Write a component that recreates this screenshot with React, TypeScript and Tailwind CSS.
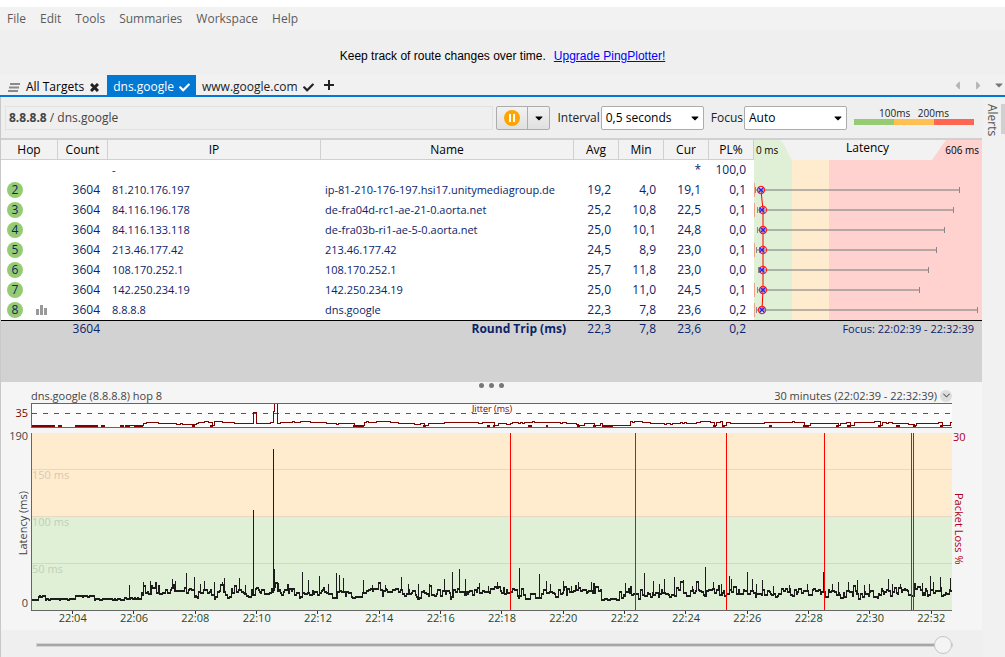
import React from 'react';
import { FaCheck, FaCaretDown, FaCaretLeft, FaCaretRight } from 'react-icons/fa';
import { HiChevronDown } from 'react-icons/hi2';

const menuItems = ['File', 'Edit', 'Tools', 'Summaries', 'Workspace', 'Help'];

interface Hop {
  hop: string;
  count: string;
  ip: string;
  name: string;
  avg: string;
  min: string;
  cur: string;
  pl: string;
}

const hops: Hop[] = [
  { hop: '', count: '', ip: '-', name: '', avg: '', min: '', cur: '*', pl: '100,0' },
  { hop: '2', count: '3604', ip: '81.210.176.197', name: 'ip-81-210-176-197.hsi17.unitymediagroup.de', avg: '19,2', min: '4,0', cur: '19,1', pl: '0,1' },
  { hop: '3', count: '3604', ip: '84.116.196.178', name: 'de-fra04d-rc1-ae-21-0.aorta.net', avg: '25,2', min: '10,8', cur: '22,5', pl: '0,1' },
  { hop: '4', count: '3604', ip: '84.116.133.118', name: 'de-fra03b-ri1-ae-5-0.aorta.net', avg: '25,0', min: '10,1', cur: '24,8', pl: '0,0' },
  { hop: '5', count: '3604', ip: '213.46.177.42', name: '213.46.177.42', avg: '24,5', min: '8,9', cur: '23,0', pl: '0,1' },
  { hop: '6', count: '3604', ip: '108.170.252.1', name: '108.170.252.1', avg: '25,7', min: '11,8', cur: '23,0', pl: '0,0' },
  { hop: '7', count: '3604', ip: '142.250.234.19', name: '142.250.234.19', avg: '25,0', min: '11,0', cur: '24,5', pl: '0,1' },
  { hop: '8', count: '3604', ip: '8.8.8.8', name: 'dns.google', avg: '22,3', min: '7,8', cur: '23,6', pl: '0,2' },
];

// whisker ends and markers of each hop, in graph units
const ranges = [
  { min: 2, max: 206, avg: 7, cur: 7, loss: 1 },
  { min: 4, max: 200, avg: 9, cur: 8, loss: 1 },
  { min: 4, max: 191, avg: 9, cur: 9, loss: 0 },
  { min: 3, max: 183, avg: 9, cur: 8, loss: 2 },
  { min: 5, max: 175, avg: 9, cur: 8, loss: 0 },
  { min: 4, max: 166, avg: 9, cur: 9, loss: 2 },
  { min: 3, max: 224, avg: 8, cur: 8, loss: 2 },
];

const times = [
  '22:04', '22:06', '22:08', '22:10', '22:12', '22:14', '22:16', '22:18',
  '22:20', '22:22', '22:24', '22:26', '22:28', '22:30', '22:32',
];

const PLOT_W = 920;
const PLOT_H = 177;

const lossLines = [478, 603, 694, 792, 879, 881];

// [x, height above the axis]
const spikes: number[][] = [
  [98, 25], [112, 28], [119, 29], [125, 23], [141, 31], [144, 29], [155, 37], [163, 33], [169, 26], [173, 29],
  [183, 28], [191, 28], [193, 32], [208, 32], [214, 25], [222, 100], [242, 161], [243, 41], [247, 27], [257, 25],
  [271, 38], [277, 30], [288, 34], [297, 26], [305, 37], [308, 35], [312, 32], [332, 30], [341, 25], [348, 27],
  [354, 25], [370, 33], [377, 26], [387, 26], [398, 26], [413, 31], [421, 38], [428, 41], [434, 31], [448, 27],
  [457, 24], [466, 28], [479, 34], [488, 42], [508, 36], [515, 29], [519, 26], [532, 29], [540, 24], [547, 28],
  [560, 28], [594, 27], [604, 28], [613, 37], [622, 29], [628, 26], [633, 31], [643, 33], [652, 30],
  [661, 24], [674, 43], [682, 28], [690, 26], [698, 34], [700, 31], [716, 38], [721, 31], [725, 26], [731, 30],
  [742, 24], [758, 25], [776, 26], [792, 38], [801, 26], [807, 28], [817, 28], [826, 30], [833, 25], [838, 26],
  [857, 31], [861, 26], [869, 26], [891, 27], [899, 34], [902, 28], [909, 33], [919, 32],
];

// quiet stretches: [from, to, height]
const calm: number[][] = [
  [0, 5, 11], [5, 12, 14], [12, 44, 11], [44, 63, 14], [63, 92, 11], [92, 108, 12],
  [319, 330, 13], [494, 499, 11], [570, 586, 11],
];

function makeRandom(seed: number) {
  let s = seed;
  return () => {
    s = (s * 1103515245 + 12345) % 2147483648;
    return s / 2147483648;
  };
}

function latencyPath() {
  const rnd = makeRandom(41);
  let d = `M0 ${PLOT_H - 11}`;
  let y = PLOT_H - 11;
  let next = 0;
  for (let x = 1; x < PLOT_W; x += 1) {
    if (x >= next) {
      const quiet = calm.find(([a, b]) => x >= a && x < b);
      let h: number;
      if (quiet) {
        h = quiet[2] + Math.round(rnd() * 1.4);
      } else {
        h = 18 + Math.round(Math.sin(x / 2.7) * 2 + Math.sin(x / 17) * 1.5 + (rnd() - 0.5) * 6);
        if (rnd() > 0.85) h += 5;
      }
      y = PLOT_H - h;
      next = x + 1 + Math.floor(rnd() * 2.4);
    }
    d += `H${x - 0.5}`;
    const spike = spikes.find(([at]) => at === x);
    if (spike) d += `V${PLOT_H - spike[1]}`;
    d += `V${y}`;
  }
  return `${d}H${PLOT_W}`;
}

// flat-line stretches of the jitter strip
const jitterFlat: number[][] = [
  [0, 23], [26, 30], [43, 66], [69, 73], [88, 92], [93, 98], [102, 111], [160, 163], [178, 181],
  [321, 332], [391, 394], [455, 458], [461, 463], [496, 500], [514, 516], [545, 548], [561, 564], [570, 581],
  [681, 684], [690, 693], [737, 740], [771, 777], [804, 807], [815, 819], [846, 849], [864, 868], [881, 884], [908, 911],
];

function jitterPath() {
  const rnd = makeRandom(7);
  let d = 'M98 21.5H111V19.5';
  for (let x = 112; x < PLOT_W; x += 2) {
    if (x === 220) {
      d += 'H221.5V8.5H224.5V19.5';
      x = 224;
      continue;
    }
    if (x === 240) {
      d += 'H241.5V7.5H242.5V-1M245.5 -1V19.5';
      x = 246;
      continue;
    }
    if (rnd() > 0.55) continue;
    const flat = jitterFlat.some(([a, b]) => x >= a && x < b);
    const h = flat ? 21.5 : 19.5 - Math.round(Math.sin(x / 13) * 0.8 + rnd() * 1.3);
    d += `H${x + 0.5}V${h}`;
  }
  return `${d}H${PLOT_W}`;
}

function MenuBar() {
  return (
    <nav className="mt-[7px] flex h-[23px] items-center gap-[14px] bg-[#f2f2f2] px-[7px] text-[#5c5c5c]">
      {menuItems.map((item) => (
        <button key={item} className="hover:text-black">
          {item}
        </button>
      ))}
    </nav>
  );
}

function TabBar() {
  return (
    <div className="flex h-[22px] items-stretch border-b-2 border-[#0078d4] bg-[#f1f1f1] text-[#222]">
      <button className="flex items-center gap-[6px] pt-1 pr-2 pl-2">
        <svg width="12" height="9" viewBox="0 0 12 9" stroke="#8a8a8a" strokeWidth="2">
          <path d="M2 1H12M1 4.5H11M0 8H10" />
        </svg>
        <span className="text-black">All Targets</span>
        <svg width="9" height="9" viewBox="0 0 9 9" stroke="#222" strokeWidth="3">
          <path d="M1 1L8 8M8 1L1 8" />
        </svg>
      </button>
      <button className="flex items-center gap-[5px] bg-[#0078d4] px-[6px] pt-1 text-white">
        dns.google
        <FaCheck size={11} />
      </button>
      <button className="flex items-center gap-[5px] px-[6px] pt-1">
        www.google.com
        <FaCheck size={11} />
      </button>
      <button className="flex items-center px-1" aria-label="New target">
        <svg width="10" height="10" viewBox="0 0 10 10" stroke="#222" strokeWidth="2">
          <path d="M5 0V10M0 5H10" />
        </svg>
      </button>
      <div className="ml-auto flex items-center gap-2 text-[#b5b5b5]">
        <button aria-label="Scroll left"><FaCaretLeft size={13} /></button>
        <button aria-label="Scroll right"><FaCaretRight size={13} /></button>
        <button aria-label="Tab list" className="text-[#777]"><FaCaretDown size={12} /></button>
      </div>
    </div>
  );
}

interface PickerProps {
  id: string;
  label: string;
  value: string;
}

function Picker({ id, label, value }: PickerProps) {
  return (
    <div className="flex items-center gap-px">
      <label htmlFor={id} className="text-[#222]">{label}</label>
      <div className="relative">
        <select
          id={id}
          defaultValue={value}
          className="h-6 w-[103px] appearance-none rounded-[2px] border border-[#acacac] bg-white pl-1 text-black"
        >
          <option>{value}</option>
        </select>
        <FaCaretDown size={12} className="pointer-events-none absolute top-[6px] right-[3px] text-black" />
      </div>
    </div>
  );
}

function Toolbar() {
  return (
    <div className="flex h-[41px] items-center pr-2 pl-1">
      <div className="flex h-6 flex-1 items-center border border-[#e2e2e2] px-[3px] text-[#444]">
        <span><b>8.8.8.8</b> / dns.google</span>
      </div>
      <div className="ml-[3px] flex h-6 rounded-[2px] border border-[#acacac] bg-linear-to-b from-[#f2f2f2] to-[#e0e0e0]">
        <button className="flex w-[31px] items-center justify-center border-r border-[#acacac]" aria-label="Pause">
          <svg width="16" height="16" viewBox="0 0 16 16">
            <circle cx="8" cy="8" r="8" fill="#ffa500" />
            <path d="M6 4V12M10 4V12" stroke="#fff" strokeWidth="2" />
          </svg>
        </button>
        <button className="flex w-[21px] items-center justify-center" aria-label="More">
          <FaCaretDown size={12} />
        </button>
      </div>
      <div className="ml-[7px] flex gap-[7px]">
        <Picker id="interval" label="Interval" value="0,5 seconds" />
        <Picker id="focus" label="Focus" value="Auto" />
      </div>
      <div className="ml-[7px] w-[120px] pb-1 text-[10px] leading-3 text-[#222]">
        <div className="flex justify-between px-[25px]">
          <span>100ms</span>
          <span>200ms</span>
        </div>
        <div className="grid h-[6px] grid-cols-3">
          <span className="bg-[#95cc73]" />
          <span className="bg-[#ffc050]" />
          <span className="bg-[#ff6550]" />
        </div>
      </div>
    </div>
  );
}

function LatencyGraph() {
  return (
    <svg className="block h-[160px] w-full" viewBox="0 0 228 160" preserveAspectRatio="none">
      <rect width="38" height="160" fill="#dff0d6" />
      <rect x="38" width="37" height="160" fill="#ffebcd" />
      <rect x="75" width="153" height="160" fill="#ffd1cf" />
      {ranges.map((r, i) => {
        const y = 30 + i * 20;
        return (
          <g key={y}>
            {r.loss > 0 && <path d={`M0.5 ${y - 7}V${y + 7}`} stroke="#e8a58c" strokeWidth="1" />}
            <path d={`M${r.min} ${y}H${r.max}`} stroke="#888" strokeOpacity="0.6" strokeWidth="2" />
            <path d={`M${r.min - 0.5} ${y - 3}V${y + 3}M${r.max - 0.5} ${y - 3}V${y + 3}`} stroke="#888" strokeWidth="1" />
          </g>
        );
      })}
      <polyline
        points={ranges.map((r, i) => `${r.avg},${30 + i * 20}`).join(' ')}
        fill="none"
        stroke="red"
        strokeWidth="1"
      />
      {ranges.map((r, i) => {
        const y = 30 + i * 20;
        return (
          <g key={y} fill="none">
            <circle cx={r.avg} cy={y} r="3.6" stroke="#f22" strokeWidth="1.2" />
            <path d={`M${r.cur - 2.5} ${y - 2.5}l5 5m0 -5l-5 5`} stroke="#22f" strokeWidth="1.3" />
          </g>
        );
      })}
    </svg>
  );
}

const th = 'border-r border-b border-[#d0d0d0] bg-[#f2f2f2] p-0 font-normal';
const num = 'p-0 pr-2 text-right';
const total = 'border-t border-black p-0 pr-2 text-right';

function HopTable() {
  return (
    <table className="w-full table-fixed border-separate border-spacing-0 border-t-2 border-[#d0d0d0] bg-white text-[#0a246a]">
      <colgroup>
        <col className="w-[57px]" />
        <col className="w-[50px]" />
        <col className="w-[213px]" />
        <col />
        <col className="w-[45px]" />
        <col className="w-[45px]" />
        <col className="w-[45px]" />
        <col className="w-[45px]" />
        <col className="w-[228px]" />
      </colgroup>
      <thead className="text-black">
        <tr className="h-5">
          <th className={th}>Hop</th>
          <th className={th}>Count</th>
          <th className={th}>IP</th>
          <th className={th}>Name</th>
          <th className={th}>Avg</th>
          <th className={th}>Min</th>
          <th className={th}>Cur</th>
          <th className={th}>PL%</th>
          <th className="p-0 font-normal">
            <div className="relative grid h-5 grid-cols-3 items-center pr-[3px] pl-[2px]">
              <svg className="absolute inset-0 h-full w-full" viewBox="0 0 228 20" preserveAspectRatio="none">
                <rect width="228" height="20" fill="#f2f2f2" />
                <path d="M0 0H25C32 3 33 14 38 20H0Z" fill="#dff0d6" />
                <path d="M228 0H192L178 20H228Z" fill="#ffd1cf" />
              </svg>
              <span className="relative text-left text-[10px]">0 ms</span>
              <span className="relative pb-1">Latency</span>
              <span className="relative text-right text-[10px]">606 ms</span>
            </div>
          </th>
        </tr>
      </thead>
      <tbody>
        {hops.map((row, i) => (
          <tr key={row.ip} className="h-5">
            <td className="p-0">
              <div className="flex items-center gap-[13px] pl-[6px]">
                {row.hop && (
                  <span className="flex size-4 items-center justify-center rounded-full bg-[#95cc73]">{row.hop}</span>
                )}
                {row.hop === '8' && (
                  <svg width="11" height="10" viewBox="0 0 11 10" fill="#999">
                    <path d="M0 4H3V10H0ZM4 0H7V10H4ZM8 3H11V10H8Z" />
                  </svg>
                )}
              </div>
            </td>
            <td className={num}>{row.count}</td>
            <td className="p-0 pl-1 text-[11px]">{row.ip}</td>
            <td className="p-0 pl-1 text-[11px] whitespace-nowrap">{row.name}</td>
            <td className={num}>{row.avg}</td>
            <td className={num}>{row.min}</td>
            <td className={num}>{row.cur}</td>
            <td className={num}>{row.pl}</td>
            {i === 0 && (
              <td className="p-0" rowSpan={8}>
                <LatencyGraph />
              </td>
            )}
          </tr>
        ))}
      </tbody>
      <tfoot className="bg-[#d2d2d2]">
        <tr className="h-[62px] align-top leading-4">
          <td className={total} />
          <td className={total}>3604</td>
          <td className={total} />
          <td className={`${total} font-bold`}>Round Trip (ms)</td>
          <td className={total}>22,3</td>
          <td className={total}>7,8</td>
          <td className={total}>23,6</td>
          <td className={total}>0,2</td>
          <td className={`${total} text-[11px]`}>Focus: 22:02:39 - 22:32:39</td>
        </tr>
      </tfoot>
    </table>
  );
}

function TimeGraph() {
  return (
    <section className="bg-[#f5f5f5] pb-[7px]">
      <div className="flex h-[7px] items-center justify-center gap-[5px]">
        <span className="size-[5px] rounded-full bg-[#777]" />
        <span className="size-[5px] rounded-full bg-[#777]" />
        <span className="size-[5px] rounded-full bg-[#777]" />
      </div>
      <div className="flex h-[14px] items-center justify-between pr-[30px] pb-px pl-[30px] text-[11px] text-[#444]">
        <span>dns.google (8.8.8.8) hop 8</span>
        <span className="flex items-center gap-[3px]">
          30 minutes (22:02:39 - 22:32:39)
          <button className="flex size-3 items-center justify-center rounded-full bg-[#ddd]" aria-label="Time range">
            <HiChevronDown size={9} strokeWidth={1} />
          </button>
        </span>
      </div>

      {/* Jitter strip */}
      <div className="flex text-[11px]">
        <span className="w-[30px] pt-[2px] pr-[3px] text-right leading-4 text-[#800000]">35</span>
        <div className="relative h-[25px] flex-1 border border-r-0 border-[#666] bg-[#fcfcfc]">
          <svg className="block h-full w-full" viewBox="0 0 920 23" preserveAspectRatio="none" fill="none" shapeRendering="crispEdges">
            <path d="M0 9.5H920" stroke="#555" strokeDasharray="5 6" />
            <path d={jitterPath()} stroke="#800000" />
            {jitterFlat.map(([a, b]) => (
              <path key={a} d={`M${a} 22H${b}`} stroke="#800000" strokeWidth="2" />
            ))}
          </svg>
          <span className="absolute inset-x-0 top-0 text-center text-[9px] leading-[10px] text-[#800000]">Jitter (ms)</span>
        </div>
        <span className="w-[30px]" />
      </div>

      {/* Latency plot */}
      <div className="mt-[5px] flex text-[11px]">
        <div className="relative flex w-[30px] flex-col justify-between pr-[3px] pb-[2px] text-right leading-3 text-[#444]">
          <span className="leading-[6px]">190</span>
          <span className="absolute top-[58px] right-[2px] rotate-180 [writing-mode:vertical-rl]">Latency (ms)</span>
          <span>0</span>
        </div>
        <div className="relative flex-1 border-b border-l border-[#666]">
          <svg className="block h-[177px] w-full" viewBox="0 0 920 177" preserveAspectRatio="none" fill="none" shapeRendering="crispEdges">
            <rect width="920" height="84" fill="#ffebcd" />
            <rect y="84" width="920" height="93" fill="#dff0d6" />
            <path d="M0 36.5H920M0 83.5H920" stroke="#e8d8c0" />
            <path d="M0 130.5H920" stroke="#cbdcc4" />
            <g stroke="#1c1c1c">
              <path d={latencyPath()} />
              <path d={latencyPath()} transform="translate(0 1)" />
            </g>
            {lossLines.map((x) => (
              <path key={x} d={`M${x}.5 0V177`} stroke="red" />
            ))}
          </svg>
          <div className="absolute top-[35px] left-0 flex flex-col leading-[14px] text-[#d8c9b0]">
            <span className="h-[47px]">150 ms</span>
            <span className="h-[47px] text-[#bfcfb8]">100 ms</span>
            <span className="text-[#bfcfb8]">50 ms</span>
          </div>
        </div>
        <div className="flex w-[30px] flex-col items-start gap-[52px] pl-px leading-3 text-[#b00020]">
          <span className="leading-[8px]">30</span>
          <span className="[writing-mode:vertical-rl]">Packet Loss %</span>
        </div>
      </div>

      <div className="mr-5 ml-[41px] grid grid-cols-[repeat(15,minmax(0,1fr))] text-center text-[11px] leading-[11px] text-[#1e4a24]">
        {times.map((t) => (
          <span key={t} className="flex flex-col items-center">
            <i className="-mb-[2px] h-[3px] w-px bg-[#333]" />
            {t}
          </span>
        ))}
      </div>
    </section>
  );
}

export default function App() {
  return (
    <div className="min-h-screen bg-white font-['Open_Sans','Noto_Sans',sans-serif] text-[12px] leading-4 text-black">
      <div className="flex min-h-screen flex-col">
        <MenuBar />
        <p className="flex h-[45px] items-center justify-center gap-2 bg-[#efefef] pt-[6px] font-['Liberation_Sans',Arial,sans-serif]">
          Keep track of route changes over time.
          <a href="#upgrade" className="text-[#00f] underline">Upgrade PingPlotter!</a>
        </p>
        <TabBar />
        <div className="flex flex-1 bg-[#efefef]">
          <main className="flex min-w-0 flex-1 flex-col border-l border-[#c8c8c8]">
            <Toolbar />
            <HopTable />
            <TimeGraph />
            <div className="flex h-[25px] items-center pt-1 pr-[29px] pl-[35px]">
              <input
                type="range"
                aria-label="Timeline"
                defaultValue={100}
                className="h-[18px] w-full appearance-none bg-transparent [&::-webkit-slider-runnable-track]:h-1 [&::-webkit-slider-runnable-track]:border [&::-webkit-slider-runnable-track]:border-[#d4d4d4] [&::-webkit-slider-runnable-track]:bg-[#a6a6a6] [&::-webkit-slider-thumb]:-mt-2 [&::-webkit-slider-thumb]:size-[18px] [&::-webkit-slider-thumb]:appearance-none [&::-webkit-slider-thumb]:rounded-full [&::-webkit-slider-thumb]:border [&::-webkit-slider-thumb]:border-[#c4c4c4] [&::-webkit-slider-thumb]:bg-[#f4f4f4]"
              />
            </div>
          </main>
          <aside className="flex w-[23px] items-start justify-between bg-[#f1f1f1] pt-[7px]">
            <button className="pl-[2px] text-[#555] [writing-mode:vertical-rl]">Alerts</button>
            <span className="h-[30px] w-1 bg-[#d0d0d0]" />
          </aside>
        </div>
      </div>
    </div>
  );
}
